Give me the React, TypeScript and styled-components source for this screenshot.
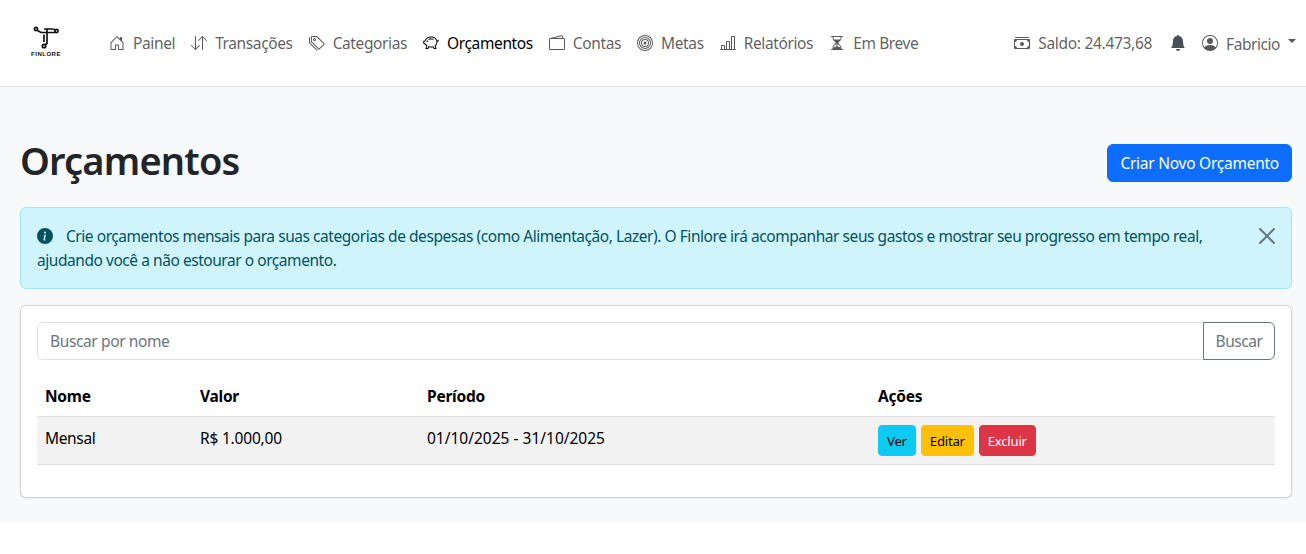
import React from "react";
import styled, { createGlobalStyle } from "styled-components";
import { BsHouseDoor, BsArrowDownUp, BsTags, BsPiggyBank, BsWallet2, BsBullseye, BsBarChartLine, BsHourglassSplit, BsCashStack, BsBellFill, BsPersonCircle, BsInfoCircleFill } from "react-icons/bs";

const Global = createGlobalStyle`
  html, body { margin: 0; padding: 0; background: #fff; }
  body { font-family: "Noto Sans", "Open Sans", "Liberation Sans", sans-serif; font-size: 15.5px; line-height: 24px; color: #212529; letter-spacing: -0.45px; }
  * { box-sizing: border-box; }
`;
const Navbar = styled.nav`
  height: 87px; background: #fff; border-bottom: 1px solid #dee2e6;
  display: flex; align-items: center; padding: 0 10px 0 30px;
`;
const Logo = styled.div`width: 32px; display: flex; flex-direction: column; align-items: center; margin-right: 47px; margin-top: -3px;`;
const LogoText = styled.span`font-family: "Liberation Sans", sans-serif; font-size: 6px; font-weight: 700; letter-spacing: 0.5px; line-height: 7px; color: #111;`;
const NavList = styled.div`display: flex; align-items: center; gap: 16px; flex: 1;`;
const NavLink = styled.a<{ $active?: boolean }>`
  display: flex; align-items: center; gap: 8px; color: ${p => p.$active ? "#000" : "rgba(0,0,0,.65)"}; white-space: nowrap; letter-spacing: -0.38px;
  svg { flex: none; }
`;
const Right = styled.div`display: flex; align-items: center; color: rgba(0,0,0,.65); white-space: nowrap;`;
const Balance = styled.span`display: flex; align-items: center; gap: 8px; margin-right: 18px; letter-spacing: -0.3px;`;
const Bell = styled.span`display: flex; margin-right: 16px; color: #495057;`;
const User = styled.span`display: flex; align-items: center; gap: 8px;`;
const UserName = styled.span`margin-top: 2px;`;
const Caret = styled.span`width: 0; height: 0; border-top: 4.8px solid rgba(0,0,0,.65); border-left: 4.8px solid transparent; border-right: 4.8px solid transparent; margin-top: -4px;`;
const Page = styled.main`background: #f8f9fa; padding: 52px 14px 25px 20px; height: 435px;`;
const Header = styled.header`display: flex; justify-content: space-between; align-items: center; margin-bottom: 20px;`;
const Title = styled.h1`margin: -3px 0 3px; font-size: 38px; line-height: 48px; font-weight: 600; color: #212529; letter-spacing: -0.8px;`;
const PrimaryButton = styled.button`
  height: 38px; padding: 0 12px; background: #0d6efd; border: 1px solid #0d6efd; border-radius: 6px; color: #fff; font: inherit; letter-spacing: -0.25px;
`;
const Alert = styled.div`
  position: relative; height: 82px; padding: 16px 48px 16px 16px; margin-bottom: 16px;
  background: #cff4fc; border: 1px solid #9eeaf9; border-radius: 6px; color: #055160;
`;
const AlertIcon = styled.span`display: inline-flex; vertical-align: -2px; margin-right: 13px;`;
const Close = styled.svg`position: absolute; top: 20px; right: 16px; width: 16px; height: 16px; fill: #000; opacity: .5;`;
const Card = styled.section`
  background: #fff; border: 1px solid rgba(0,0,0,.175); border-radius: 6px; padding: 16px; box-shadow: 0 1px 2px rgba(0,0,0,.075);
`;
const Search = styled.div`display: flex; margin-bottom: 16px;`;
const SearchInput = styled.div`
  flex: 1; height: 38px; padding: 6px 12px; border: 1px solid #dee2e6; border-radius: 6px 0 0 6px; background: #fff; color: #6c757d; letter-spacing: -0.38px;
`;
const SearchButton = styled.button`
  height: 38px; width: 72px; margin-left: -1px; background: transparent; border: 1px solid #6c757d; border-radius: 0 6px 6px 0; color: #6c757d; font: inherit; letter-spacing: inherit;
`;
const Table = styled.table`width: 100%; border-collapse: collapse; table-layout: fixed; margin-bottom: 16px; color: #000;`;
const Th = styled.th<{ $w: number }>`
  width: ${p => p.$w}px; text-align: left; padding: 8px; font-weight: 700; border-bottom: 1px solid #dee2e6; height: 40px; letter-spacing: -0.25px;
`;
const Td = styled.td<{ $spacing: number }>`
  background: #f2f2f2; padding: 9px 8px 8px; height: 48px; vertical-align: top; border-bottom: 1px solid #dee2e6; letter-spacing: ${p => p.$spacing}px;
`;
const ActionCell = styled(Td)`padding-top: 8px;`;
const Actions = styled.div`display: flex; gap: 5px;`;
const SmallButton = styled.button<{ $bg: string; $fg: string }>`
  height: 31px; padding: 0 8px; border: 1px solid ${p => p.$bg}; background: ${p => p.$bg}; color: ${p => p.$fg}; border-radius: 4px; font: inherit; font-size: 13.2px; letter-spacing: -0.25px;
`;

const FinloreMark = () => (
  <svg width="26" height="26" viewBox="0 0 26 26" fill="none" stroke="#111" strokeWidth="1.7">
    <circle cx="3" cy="4" r="1.6" />
    <path d="M4.5 5.5 L8 7.5 H23" />
    <circle cx="23.5" cy="6" r="1.6" />
    <path d="M11 4 H20 L22.5 5" />
    <path d="M14 4 V19" />
    <path d="M11 9.5 V17" />
    <circle cx="11" cy="21" r="1.7" />
    <path d="M12 20 L14 18.5" />
  </svg>
);

const links = [
  { label: "Painel", Icon: BsHouseDoor },
  { label: "Transações", Icon: BsArrowDownUp },
  { label: "Categorias", Icon: BsTags },
  { label: "Orçamentos", Icon: BsPiggyBank, active: true },
  { label: "Contas", Icon: BsWallet2 },
  { label: "Metas", Icon: BsBullseye },
  { label: "Relatórios", Icon: BsBarChartLine },
  { label: "Em Breve", Icon: BsHourglassSplit },
];

export default function App() {
  return (
    <>
      <Global />
      <Navbar>
        <Logo><FinloreMark /><LogoText>FINLORE</LogoText></Logo>
        <NavList>
          {links.map(({ label, Icon, active }) => (
            <NavLink key={label} $active={active}><Icon size={16} />{label}</NavLink>
          ))}
        </NavList>
        <Right>
          <Balance><BsCashStack size={16} />Saldo: 24.473,68</Balance>
          <Bell><BsBellFill size={16} /></Bell>
          <User><BsPersonCircle size={16} /><UserName>Fabricio</UserName><Caret /></User>
        </Right>
      </Navbar>
      <Page>
        <Header>
          <Title>Orçamentos</Title>
          <PrimaryButton>Criar Novo Orçamento</PrimaryButton>
        </Header>
        <Alert>
          <AlertIcon><BsInfoCircleFill size={16} /></AlertIcon>
          Crie orçamentos mensais para suas categorias de despesas (como Alimentação, Lazer). O Finlore irá acompanhar seus gastos e mostrar seu progresso em tempo real, ajudando você a não estourar o orçamento.
          <Close viewBox="0 0 16 16"><path d="M.293.293a1 1 0 0 1 1.414 0L8 6.586 14.293.293a1 1 0 1 1 1.414 1.414L9.414 8l6.293 6.293a1 1 0 0 1-1.414 1.414L8 9.414l-6.293 6.293a1 1 0 0 1-1.414-1.414L6.586 8 .293 1.707a1 1 0 0 1 0-1.414z" /></Close>
        </Alert>
        <Card>
          <Search>
            <SearchInput>Buscar por nome</SearchInput>
            <SearchButton>Buscar</SearchButton>
          </Search>
          <Table>
            <thead>
              <tr><Th $w={155}>Nome</Th><Th $w={227}>Valor</Th><Th $w={451}>Período</Th><Th $w={405}>Ações</Th></tr>
            </thead>
            <tbody>
              <tr>
                <Td $spacing={-0.35}>Mensal</Td>
                <Td $spacing={-0.2}>R$ 1.000,00</Td>
                <Td $spacing={0}>01/10/2025 - 31/10/2025</Td>
                <ActionCell $spacing={0}>
                  <Actions>
                    <SmallButton $bg="#0dcaf0" $fg="#000">Ver</SmallButton>
                    <SmallButton $bg="#ffc107" $fg="#000">Editar</SmallButton>
                    <SmallButton $bg="#dc3545" $fg="#fff">Excluir</SmallButton>
                  </Actions>
                </ActionCell>
              </tr>
            </tbody>
          </Table>
        </Card>
      </Page>
    </>
  );
}
